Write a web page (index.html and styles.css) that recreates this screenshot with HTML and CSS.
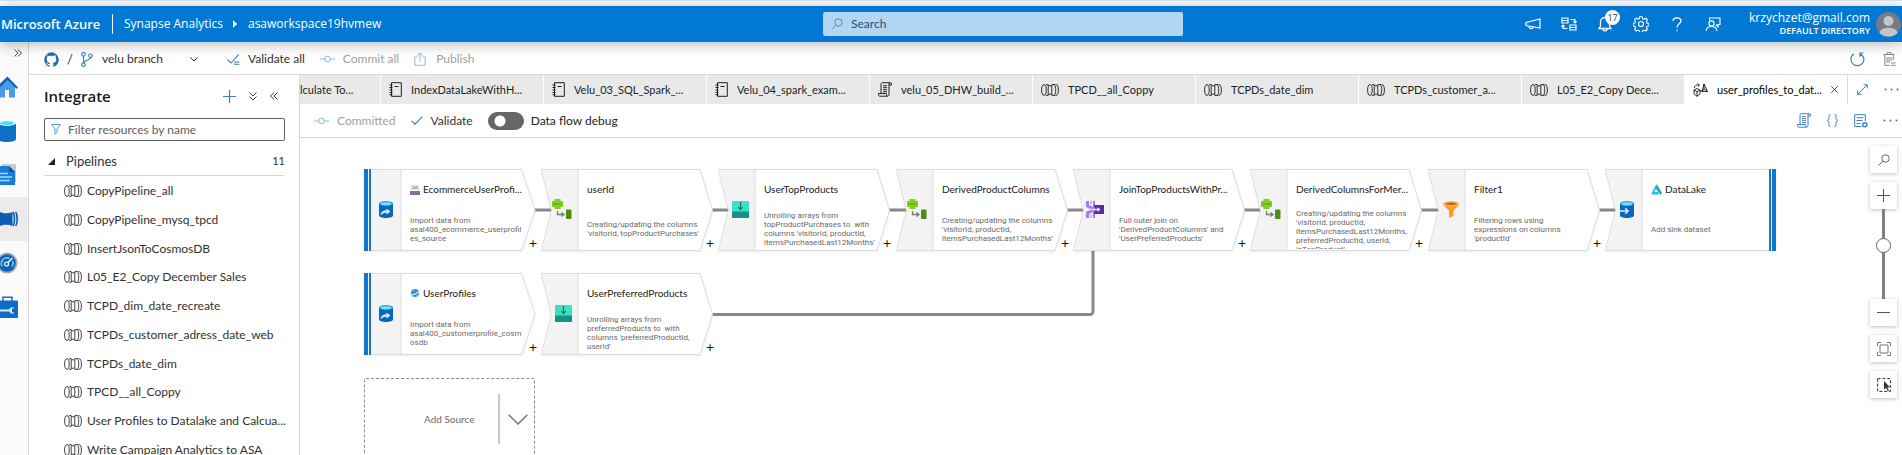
FILE: index.html
```html
<!DOCTYPE html>
<html lang="en">
<head>
<meta charset="utf-8">
<title>Synapse Analytics - asaworkspace19hvmew</title>
<link rel="stylesheet" href="styles.css">
</head>
<body>
<svg class="sprite" aria-hidden="true">
  <symbol id="i-pipe" viewBox="0 0 18 12"><g fill="none" stroke="currentColor" stroke-width=".9"><path d="M3 .6C1.300.6.6 3 .6 6s.7 5.400 2.400 5.400M3 .6c1.600 0 2.200 2.400 2.200 5.400S4.600 11.400 3 11.400M5 .6h2.200M5 11.400h2.200M7.200.6v10.800M7.200 1.800h3.600M7.200 10.200h3.600M10.800.6v10.800M10.800.6h3.700M10.800 11.400h3.700M13.200.6c1.300 1.200 1.500 3 1.500 5.400s-.2 4.200-1.500 5.400M15 .6c1.700 0 2.400 2.400 2.400 5.400s-.7 5.400-2.400 5.400"/></g></symbol>
  <symbol id="i-book" viewBox="0 0 13 15"><g fill="none" stroke="currentColor"><path d="M2.500.7h9.800v13.600H2.500zM5.500 4.500h4"/><path d="M.5 3h3M.5 5.500h3M.5 8h3M.5 10.500h3M.5 12.700h3"/></g></symbol>
  <symbol id="i-script" viewBox="0 0 14 15"><g fill="none" stroke="currentColor"><path d="M3 11V2.500C3 1.200 3.600.7 4.500.7h8c.8 0 1 .6 1 1.300v1H11v9.500c0 1-.6 1.700-1.500 1.700H2c-1 0-1.500-.7-1.500-1.500V11.500h8v1.300c0 .8.400 1.400 1 1.400M11 3V2c0-.8.500-1.300 1.200-1.300M5 3.700h4M5 5.700h4M5 7.700h4M5 9.700h4"/></g></symbol>
  <symbol id="i-flow" viewBox="0 0 15 14"><g fill="none" stroke="currentColor" stroke-width=".8"><path d="M1.500 5C1.500 2.500 3 1.700 6 2M4.500.4 6.500 2 4.800 3.700M4 5.500 7 7v4l-3 2.300L1 11V7zM1 7l3 1.700L7 7M4 8.700v4.600M7 8.200l2.500-.7M11 1l3.500 7.500H9zM11 1v5l3.500 2.500M11 6 9 8.500"/></g></symbol>
  <symbol id="i-commit" viewBox="0 0 15 8"><g fill="none" stroke="currentColor"><circle cx="7.500" cy="4" r="2.800"/><path d="M0 4h4.700M10.300 4H15"/></g></symbol>
  <symbol id="i-check" viewBox="0 0 12 9"><path d="M.7 4.800 4 8.200 11.300.7" fill="none" stroke="currentColor" stroke-width="1.200"/></symbol>
  <symbol id="i-chev" viewBox="0 0 8 5"><path d="M.5.5 4 4 7.500.5" fill="none" stroke="currentColor"/></symbol>
  <symbol id="i-dbl" viewBox="0 0 8 8"><path d="M.5.500 4 4 .5 7.500M4 .5 7.500 4 4 7.500" fill="none" stroke="currentColor"/></symbol>
  <symbol id="i-mag" viewBox="0 0 12 12"><g fill="none" stroke="currentColor"><circle cx="7.500" cy="4.500" r="3.700"/><path d="M4.800 7.200.5 11.500"/></g></symbol>
  <symbol id="i-dots" viewBox="0 0 15 3"><g fill="currentColor"><circle cx="1.500" cy="1.500" r="1"/><circle cx="7.500" cy="1.500" r="1"/><circle cx="13.500" cy="1.500" r="1"/></g></symbol>
  <symbol id="i-source" viewBox="0 0 14 17"><path d="M0 2.500h14v12c0 1.400-3.100 2.500-7 2.500s-7-1.100-7-2.500z" fill="#0a66bd"/><ellipse cx="7" cy="2.500" rx="7" ry="2.500" fill="#2ea3e0"/><ellipse cx="7" cy="2.700" rx="5.300" ry="1.500" fill="#6fe0f5"/><path d="M1.500 14.500c0-3.700 2.500-5.200 6-5.200V7.500l4 3-4 3v-1.700c-3 0-4.500.8-6 2.700z" fill="#c9eaff"/></symbol>
  <symbol id="i-sink" viewBox="0 0 14 17"><path d="M0 2.500h14v12c0 1.400-3.100 2.500-7 2.500s-7-1.100-7-2.500z" fill="#0a66bd"/><ellipse cx="7" cy="2.500" rx="7" ry="2.500" fill="#2ea3e0"/><ellipse cx="7" cy="2.700" rx="5.300" ry="1.500" fill="#6fe0f5"/><path d="M0 10h8M5.300 7.300 8 10l-2.700 2.700" fill="none" stroke="#d9efff" stroke-width="1.500"/></symbol>
  <symbol id="i-derive" viewBox="0 0 20 20"><path d="M2.500 0h6v2H11v6H8.500v2h-6V8H0V2h2.500z" fill="#84d01c"/><path d="M1 4h9v2H1z" fill="#6ab815"/><path d="M5.500 12v3.500h6M9.500 13.500l2.500 2-2.500 2" fill="none" stroke="#7a7a7a" stroke-width="1.300"/><rect x="14" y="10.500" width="5.500" height="9.500" rx="1" fill="#4c8f10"/></symbol>
  <symbol id="i-flat" viewBox="0 0 17 17"><rect width="17" height="17" rx=".8" fill="#3de0c4"/><path d="M0 10.500h17v5.500c0 .6-.4 1-1 1H1c-.6 0-1-.4-1-1z" fill="#1b9088"/><path d="M8.500 1v7M6.300 6.200l2.200 2.300 2.200-2.300" fill="none" stroke="#146f6a" stroke-width="1.200"/></symbol>
  <symbol id="i-join" viewBox="0 0 18 17"><path d="M0 0h3v4l4 2V0h2v7h2v3H9v7H7v-6l-4 2v4H0v-6l5-2.500L0 6z" fill="#a67af4"/><path d="M4 0h2v4L4 3zM4 17h2v-4l-2 1z" fill="#cbb0fa"/><path d="M7.500 4H18v9H7.500l2-4.500z" fill="#5a2ba8"/><path d="M4 8.500h9M11.500 6.800l2 1.700-2 1.700" fill="none" stroke="#e6dafd" stroke-width="1.300"/></symbol>
  <symbol id="i-funnel" viewBox="0 0 16 17"><path d="M0 2.500h16c0 2-1.500 3-5.500 7V15L6 17V9.500C2 5.500 0 4.500 0 2.500z" fill="#fb9e22"/><ellipse cx="8" cy="2.500" rx="8" ry="2.500" fill="#ffc27a"/><ellipse cx="8" cy="2.700" rx="6" ry="1.500" fill="#c8690b"/></symbol>
</svg>

<div class="browser-edge"></div>

<header class="azure">
  <div class="brand"><strong>Microsoft Azure</strong><span class="rule"></span><span>Synapse Analytics</span><i class="caret"></i><span>asaworkspace19hvmew</span></div>
  <label class="search"><svg width="12" height="12"><use href="#i-mag"/></svg><input type="text" placeholder="Search" aria-label="Search"></label>
  <div class="account">
    <button aria-label="Announcements"><svg width="16" height="12" viewBox="0 0 16 12"><path d="M1 4.500 15 1v9L1 7.500zM4 8.200c0 3 4 3 4 .8" fill="none" stroke="#fff" stroke-width="1.200"/></svg></button>
    <button aria-label="Switch directory"><svg width="16" height="14" viewBox="0 0 16 14"><path d="M1 1h6v5H1zM1 3.500h6M9 8h6v5H9zM9 10.500h6M9.500 2.500H14v3.300M12.300 4.300 14 6l1.700-1.700M6.500 11.500H2V8.200M.3 9.700 2 8l1.700 1.700" fill="none" stroke="#fff" stroke-width="1.200"/></svg></button>
    <button class="bell" aria-label="Notifications"><svg width="14" height="16" viewBox="0 0 14 16"><path d="M1 12.500h12L11.500 10V6c0-3-2-4.500-4.500-4.500S2.500 3 2.500 6v4zM5 13c0 2.500 4 2.500 4 0" fill="none" stroke="#fff" stroke-width="1.300"/></svg><span class="badge">17</span></button>
    <button aria-label="Settings"><svg width="16" height="16" viewBox="0 0 16 16"><g fill="none" stroke="#fff"><path d="m6.500 1 .4-.2h2.200l.6 2 1.300.5 1.800-1 1.600 1.600-1 1.800.5 1.300 2 .6v2.200l-2 .6-.5 1.300 1 1.800-1.600 1.600-1.800-1-1.300.5-.6 2H6.900l-.6-2-1.300-.5-1.800 1-1.600-1.600 1-1.800-.5-1.300-2-.6V7.400l2-.6.5-1.300-1-1.800 1.600-1.600 1.800 1 1.300-.5z" stroke-width="1.100"/><circle cx="8" cy="8" r="2.500" stroke-width="1.200"/></g></svg></button>
    <button aria-label="Help"><svg width="10" height="15" viewBox="0 0 10 15"><path d="M1 4c0-4 8-4.200 8-.2C9 6.700 5 7 5 10.500M5 12.700v1.600" fill="none" stroke="#fff" stroke-width="1.300"/></svg></button>
    <button aria-label="Feedback"><svg width="16" height="15" viewBox="0 0 16 15"><path d="M4.500 3.500V1H15v6.500h-2v2.300l-2.300-2.300" fill="none" stroke="#fff" stroke-width="1.100"/><circle cx="6.500" cy="6.500" r="2.600" fill="none" stroke="#fff" stroke-width="1.100"/><path d="M1 14c.7-6 10.300-6 11 0" fill="none" stroke="#fff" stroke-width="1.100"/></svg></button>
    <div class="who"><span>krzychzet@gmail.com</span><b>DEFAULT DIRECTORY</b></div>
    <svg class="avatar" width="25" height="25" viewBox="0 0 25 25"><circle cx="12.500" cy="12.500" r="12.500" fill="#767b84"/><circle cx="12.500" cy="9" r="5" fill="#c3c5ca"/><path d="M3.500 21c1-7 17-7 18 0-4.500 4.700-13.500 4.700-18 0z" fill="#c3c5ca"/></svg>
  </div>
</header>

<div class="shell">
  <nav class="rail">
    <button class="expand" aria-label="Expand"><svg width="8" height="8"><use href="#i-dbl"/></svg></button>
    <a href="#" aria-label="Home"><svg width="22" height="22" viewBox="0 0 22 22"><path d="M4 9v12.500h5V14h4v7.500h6V9l-7.500-7z" fill="#4a9cea"/><path d="M0 11.500 11.500.5 22 11.500l-1.500 1.200-9-8.700-9 8.700z" fill="#1560b0"/></svg></a>
    <a href="#" aria-label="Data"><svg width="22" height="22" viewBox="0 0 22 22"><path d="M2 3h18v16c0 1.700-4 3-9 3s-9-1.300-9-3z" fill="#0f6fc8"/><ellipse cx="11" cy="3" rx="9" ry="3" fill="#e2f3fb"/><ellipse cx="11" cy="3.200" rx="7" ry="2" fill="#4fdaf0"/></svg></a>
    <a href="#" aria-label="Develop"><svg width="22" height="22" viewBox="0 0 22 22"><path d="M6 0h14v18H6z" fill="#c5c9d0"/><path d="M1 2h12l6 6v13H1z" fill="#1b7bd8"/><path d="M13 2v6h6z" fill="#0d57a8"/><path d="M3 9.500h9M3 13h13M3 16.500h11" stroke="#9fdcff" stroke-width="1.500"/></svg></a>
    <a href="#" class="on" aria-label="Integrate"><svg width="22" height="16" viewBox="0 0 22 16"><path d="M4 1c3 1.700 9 1.700 12.500 0v14c-3.500-1.700-9.500-1.700-12.500 0z" fill="#0a5fb4"/><path d="M17 1c2 3.500 2 10.500 0 14M19.700 1c2 3.500 2 10.500 0 14" fill="none" stroke="#0a5fb4" stroke-width="1.600"/></svg></a>
    <a href="#" aria-label="Monitor"><svg width="22" height="22" viewBox="0 0 22 22"><circle cx="11" cy="11" r="10.500" fill="#a9adb3"/><circle cx="11" cy="11" r="8.700" fill="#0b62b8"/><path d="M6 14.500C3.500 8 9 4.500 13.500 6.500M16.500 9c1 2 .5 4-.8 5.500" fill="none" stroke="#6bd9f7" stroke-width="1.500"/><circle cx="10.500" cy="12" r="2" fill="none" stroke="#fff" stroke-width="1.200"/><path d="m12 10.500 4.500-4.500" stroke="#fff" stroke-width="1.400"/></svg></a>
    <a href="#" aria-label="Manage"><svg width="22" height="22" viewBox="0 0 22 22"><path d="M7 5V1.200h9V5" fill="none" stroke="#1672c8" stroke-width="1.600"/><rect y="4.500" width="22" height="17.500" rx="1" fill="#0f6cc4"/><path d="M3 14.500h11" stroke="#d5edff" stroke-width="2"/><path d="M18.500 12.500a3 3 0 1 0 0 4h-2.500v-4z" fill="#d5edff"/></svg></a>
  </nav>

  <div class="workspace">
    <div class="topbar">
      <svg width="15" height="15" viewBox="0 0 16 16"><path fill="#1a6fb5" d="M8 .3a8 8 0 0 0-2.500 15.500c.4.100.5-.2.500-.4v-1.500c-2.200.5-2.700-1-2.700-1-.4-1-.9-1.200-.9-1.200-.7-.5 0-.5 0-.5.800 0 1.300.8 1.300.8.700 1.300 1.900.9 2.300.7.100-.5.300-.9.500-1.100-1.700-.2-3.600-.9-3.600-3.900 0-.9.300-1.600.8-2.100-.1-.2-.4-1 .1-2.100 0 0 .700-.2 2.200.8a7.600 7.600 0 0 1 4 0c1.500-1 2.200-.8 2.200-.8.400 1.100.2 1.900.1 2.100.5.600.8 1.300.8 2.100 0 3.100-1.900 3.700-3.600 3.900.3.300.5.800.5 1.500v2.300c0 .2.100.5.500.4A8 8 0 0 0 8 .3z"/></svg>
      <span class="slash">/</span>
      <svg width="12" height="15" viewBox="0 0 12 15"><g fill="none" stroke="#2f7fc9" stroke-width="1.100"><circle cx="2.500" cy="2.300" r="1.800"/><circle cx="2.500" cy="12.700" r="1.800"/><circle cx="9.500" cy="3.800" r="1.800"/><path d="M2.500 4.100v6.800M9.500 5.600C9.500 9 3 7.500 2.700 10.900"/></g></svg>
      <button class="branch">velu branch <svg width="8" height="5"><use href="#i-chev"/></svg></button>
      <button class="act"><svg class="blue" width="13" height="11" viewBox="0 0 13 11"><path d="M.5 5.500 4 9 11.500.7M7 8h5.500M7 10.300h5.500" fill="none" stroke="currentColor" stroke-width="1.100"/></svg>Validate all</button>
      <button class="act dim"><svg class="blue" width="15" height="8"><use href="#i-commit"/></svg>Commit all</button>
      <button class="act dim pub"><svg class="blue" width="12" height="14" viewBox="0 0 12 14"><path d="M3.500 5H.8v8.300h10.400V5H8.500M6 10V1M3.300 3.500 6 .8l2.700 2.700" fill="none" stroke="currentColor"/></svg>Publish</button>
      <div class="end">
        <button aria-label="Refresh"><svg class="blue" width="15" height="15" viewBox="0 0 15 15"><path d="M4 2C-.5 4.500.2 10 3.500 12.500c3 2 7.500 1.500 9.500-2C14.700 7 13.500 4 10.500 2.300M13.500 1h-3.500v3.700" fill="none" stroke="currentColor" stroke-width="1.200"/></svg></button>
        <button aria-label="Discard all"><svg width="13" height="14" viewBox="0 0 13 14"><path d="M.5 2.500h11M4 2.500V.7h4v1.800M1.800 2.500v10.800h4.700M10.300 2.500V8M4 5v6M6 5v6M8 5v4M8 11h4.500M8 13.300h4.500" fill="none" stroke="#8a8886"/></svg></button>
      </div>
    </div>

    <div class="columns">
      <aside class="side">
        <div class="side-head"><h1>Integrate</h1>
          <button aria-label="Add"><svg class="blue" width="13" height="13" viewBox="0 0 13 13"><path d="M6.500 0v13M0 6.500h13" stroke="currentColor" stroke-width="1.200"/></svg></button>
          <button aria-label="Expand all"><svg width="8" height="9" viewBox="0 0 8 9"><path d="M.5.500 4 4 7.500.5M.5 4.500 4 8l3.500-3.500" fill="none" stroke="#444"/></svg></button>
          <button aria-label="Collapse"><svg class="flip" width="8" height="8"><use href="#i-dbl"/></svg></button>
        </div>
        <label class="filter"><svg width="10" height="11" viewBox="0 0 10 11"><path d="M.5.5h9L6 5v3.500l-2 1.700V5z" fill="none" stroke="#4a90d9" stroke-width=".9"/></svg><input type="text" placeholder="Filter resources by name" aria-label="Filter resources by name"></label>
        <div class="group"><svg width="7" height="7" viewBox="0 0 7 7"><path d="M7 0v7H0z" fill="#222"/></svg><span>Pipelines</span><em>11</em></div>
        <ul class="list">
          <li><svg width="18" height="12"><use href="#i-pipe"/></svg><span>CopyPipeline_all</span></li>
          <li><svg width="18" height="12"><use href="#i-pipe"/></svg><span>CopyPipeline_mysq_tpcd</span></li>
          <li><svg width="18" height="12"><use href="#i-pipe"/></svg><span>InsertJsonToCosmosDB</span></li>
          <li><svg width="18" height="12"><use href="#i-pipe"/></svg><span>L05_E2_Copy December Sales</span></li>
          <li><svg width="18" height="12"><use href="#i-pipe"/></svg><span>TCPD_dim_date_recreate</span></li>
          <li><svg width="18" height="12"><use href="#i-pipe"/></svg><span>TCPDs_customer_adress_date_web</span></li>
          <li><svg width="18" height="12"><use href="#i-pipe"/></svg><span>TCPDs_date_dim</span></li>
          <li><svg width="18" height="12"><use href="#i-pipe"/></svg><span>TPCD__all_Coppy</span></li>
          <li><svg width="18" height="12"><use href="#i-pipe"/></svg><span>User Profiles to Datalake and Calcua...</span></li>
          <li><svg width="18" height="12"><use href="#i-pipe"/></svg><span>Write Campaign Analytics to ASA</span></li>
        </ul>
      </aside>

      <main class="editor">
        <div class="tabrow">
          <div class="tabs">
            <button class="tab first"><span>lculate To...</span></button>
            <button class="tab"><svg width="13" height="15"><use href="#i-book"/></svg><span>IndexDataLakeWithH...</span></button>
            <button class="tab"><svg width="13" height="15"><use href="#i-book"/></svg><span>Velu_03_SQL_Spark_...</span></button>
            <button class="tab"><svg width="13" height="15"><use href="#i-book"/></svg><span>Velu_04_spark_exam...</span></button>
            <button class="tab"><svg width="14" height="15"><use href="#i-script"/></svg><span>velu_05_DHW_build_...</span></button>
            <button class="tab"><svg width="18" height="12"><use href="#i-pipe"/></svg><span>TPCD__all_Coppy</span></button>
            <button class="tab"><svg width="18" height="12"><use href="#i-pipe"/></svg><span>TCPDs_date_dim</span></button>
            <button class="tab"><svg width="18" height="12"><use href="#i-pipe"/></svg><span>TCPDs_customer_a...</span></button>
            <button class="tab"><svg width="18" height="12"><use href="#i-pipe"/></svg><span>L05_E2_Copy Dece...</span></button>
            <button class="tab active"><svg width="15" height="14"><use href="#i-flow"/></svg><span>user_profiles_to_dat...</span><svg class="close" width="7" height="7" viewBox="0 0 7 7"><path d="m.3.3 6.400 6.400M6.700.3.300 6.700" stroke="#333" stroke-width=".9"/></svg></button>
          </div>
          <div class="tabend">
            <button aria-label="Maximize"><svg class="blue" width="11" height="11" viewBox="0 0 11 11"><path d="M1 10 10 1M6.500.7h3.800v3.800M.7 6.500v3.800h3.800" fill="none" stroke="currentColor"/></svg></button>
            <button aria-label="More"><svg width="15" height="3"><use href="#i-dots"/></svg></button>
          </div>
        </div>
        <div class="bar">
          <span class="act dim"><svg class="blue" width="15" height="8"><use href="#i-commit"/></svg>Committed</span>
          <button class="act"><svg class="blue" width="12" height="9"><use href="#i-check"/></svg>Validate</button>
          <label class="toggle"><input type="checkbox">Data flow debug</label>
          <div class="end">
            <button aria-label="Script"><svg class="blue" width="14" height="15"><use href="#i-script"/></svg></button>
            <button aria-label="Code"><svg class="blue" width="13" height="13" viewBox="0 0 13 13"><path d="M4.500.5C2.500.5 3 2 3 3.500S2.700 6 1 6.500c1.700.5 2 1.500 2 3s-.5 3 1.500 3M8.500.5c2 0 1.500 1.500 1.500 3s.3 2.500 2 3c-1.700.5-2 1.500-2 3s.5 3-1.500 3" fill="none" stroke="currentColor"/></svg></button>
            <button aria-label="Properties"><svg class="blue" width="14" height="14" viewBox="0 0 14 14"><g fill="none" stroke="currentColor"><path d="M7.500 12.500H.7V.7h10.600V7M2.500 3.700h7M2.500 6.500h6M2.500 9.500h4"/><circle cx="10.800" cy="10.800" r="2" stroke-width="1.500"/></g></svg></button>
            <button aria-label="More"><svg width="15" height="3"><use href="#i-dots"/></svg></button>
          </div>
        </div>

        <div class="canvas">
          <svg class="links" width="1500" height="317" aria-hidden="true"><g fill="none" stroke="#888" stroke-width="3"><path d="M235 72h17M412 72h17M589 72h18M767 72h17M944 72h17M1121 72h18M1299 72h17M412 176.500h378a3 3 0 0 0 3-3V113"/></g></svg>

          <article class="node src" style="left:64px;top:31px"><svg class="shape" width="172" height="82" viewBox="0 0 172 82"><path d="M7 .5h150.500l13.500 41-13.500 40H7z" fill="#fff" stroke="#dcdcdc"/><path d="M7 1h30v80H7z" fill="#f3f3f3"/><path d="M37 1v80" stroke="#dedede"/><path d="M0 0h4v82H0zM5 0h2v82H5z" fill="#1276cc"/></svg><svg class="ico" width="14" height="17"><use href="#i-source"/></svg>
            <h2><svg width="10" height="11" viewBox="0 0 10 11"><path d="M1 1h8v5H1z" fill="#e6dde6"/><path d="M2.500 5 4 2.500 5 4.500l1.500-2 1 2.500" fill="none" stroke="#b79cb0"/><path d="M0 7h10v4H0z" fill="#8c6a9c"/></svg>EcommerceUserProfi...</h2><p>Import data from asal400_ecommerce_userprofiles_source</p><button class="plus" aria-label="Add step">+</button></article>

          <article class="node" style="left:241px;top:31px"><svg class="shape" width="172" height="82" viewBox="0 0 172 82"><path d="M.5.5h158.500l12.500 41-12.500 40H.5l10-40z" fill="#fff" stroke="#dcdcdc"/><path d="M1.200 1H37v80H1.200l10-39.500z" fill="#f3f3f3"/><path d="M37 1v80" stroke="#dedede"/></svg><svg class="ico" width="20" height="20"><use href="#i-derive"/></svg>
            <h2>userId</h2><p>Creating/updating the columns 'visitorId, topProductPurchases'</p><button class="plus" aria-label="Add step">+</button></article>

          <article class="node" style="left:418px;top:31px"><svg class="shape" width="172" height="82" viewBox="0 0 172 82"><path d="M.5.5h158.500l12.500 41-12.500 40H.5l10-40z" fill="#fff" stroke="#dcdcdc"/><path d="M1.200 1H37v80H1.200l10-39.500z" fill="#f3f3f3"/><path d="M37 1v80" stroke="#dedede"/></svg><svg class="ico" width="17" height="17"><use href="#i-flat"/></svg>
            <h2>UserTopProducts</h2><p>Unrolling arrays from topProductPurchases to &nbsp;with columns 'visitorId, productId, itemsPurchasedLast12Months'</p><button class="plus" aria-label="Add step">+</button></article>

          <article class="node" style="left:596px;top:31px"><svg class="shape" width="172" height="82" viewBox="0 0 172 82"><path d="M.5.5h158.500l12.500 41-12.500 40H.5l10-40z" fill="#fff" stroke="#dcdcdc"/><path d="M1.200 1H37v80H1.200l10-39.500z" fill="#f3f3f3"/><path d="M37 1v80" stroke="#dedede"/></svg><svg class="ico" width="20" height="20"><use href="#i-derive"/></svg>
            <h2>DerivedProductColumns</h2><p>Creating/updating the columns 'visitorId, productId, itemsPurchasedLast12Months'</p><button class="plus" aria-label="Add step">+</button></article>

          <article class="node" style="left:773px;top:31px"><svg class="shape" width="172" height="82" viewBox="0 0 172 82"><path d="M.5.5h158.500l12.500 41-12.500 40H.5l10-40z" fill="#fff" stroke="#dcdcdc"/><path d="M1.200 1H37v80H1.200l10-39.500z" fill="#f3f3f3"/><path d="M37 1v80" stroke="#dedede"/></svg><svg class="ico" width="18" height="17"><use href="#i-join"/></svg>
            <h2>JoinTopProductsWithPr...</h2><p>Full outer join on 'DerivedProductColumns' and 'UserPreferredProducts'</p><button class="plus" aria-label="Add step">+</button></article>

          <article class="node" style="left:950px;top:31px"><svg class="shape" width="172" height="82" viewBox="0 0 172 82"><path d="M.5.5h158.500l12.500 41-12.500 40H.5l10-40z" fill="#fff" stroke="#dcdcdc"/><path d="M1.200 1H37v80H1.200l10-39.500z" fill="#f3f3f3"/><path d="M37 1v80" stroke="#dedede"/></svg><svg class="ico" width="20" height="20"><use href="#i-derive"/></svg>
            <h2>DerivedColumnsForMer...</h2><p>Creating/updating the columns 'visitorId, productId, itemsPurchasedLast12Months, preferredProductId, userId, isTopProduct'</p><button class="plus" aria-label="Add step">+</button></article>

          <article class="node" style="left:1128px;top:31px"><svg class="shape" width="172" height="82" viewBox="0 0 172 82"><path d="M.5.5h158.500l12.500 41-12.500 40H.5l10-40z" fill="#fff" stroke="#dcdcdc"/><path d="M1.200 1H37v80H1.200l10-39.500z" fill="#f3f3f3"/><path d="M37 1v80" stroke="#dedede"/></svg><svg class="ico" width="16" height="17"><use href="#i-funnel"/></svg>
            <h2>Filter1</h2><p>Filtering rows using expressions on columns 'productId'</p><button class="plus" aria-label="Add step">+</button></article>

          <article class="node sink" style="left:1305px;top:31px"><svg class="shape" width="172" height="82" viewBox="0 0 172 82"><path d="M.5.5H165v81H.5l10-40z" fill="#fff" stroke="#dcdcdc"/><path d="M1.200 1H37v80H1.200l10-39.500z" fill="#f3f3f3"/><path d="M37 1v80" stroke="#dedede"/><path d="M164 0h2v82h-2zM167 0h4v82h-4z" fill="#1276cc"/></svg><svg class="ico" width="14" height="17"><use href="#i-sink"/></svg>
            <h2><svg width="11" height="11" viewBox="0 0 11 11"><path d="M5.500 0 11 9 9.500 11 4.800 4.500z" fill="#1a9fc9"/><path d="M4.800 1 6 3.500 3 8h4l1 2.500H0z" fill="#2bc0dd"/></svg>DataLake</h2><p>Add sink dataset</p></article>

          <article class="node src" style="left:64px;top:135px"><svg class="shape" width="172" height="82" viewBox="0 0 172 82"><path d="M7 .5h150.500l13.500 41-13.500 40H7z" fill="#fff" stroke="#dcdcdc"/><path d="M7 1h30v80H7z" fill="#f3f3f3"/><path d="M37 1v80" stroke="#dedede"/><path d="M0 0h4v82H0zM5 0h2v82H5z" fill="#1276cc"/></svg><svg class="ico" width="14" height="17"><use href="#i-source"/></svg>
            <h2><svg width="10" height="10" viewBox="0 0 10 10"><circle cx="5" cy="5" r="4" fill="#2f8fe0"/><path d="M0 6.500C3 7.500 8 5 10 2.500" stroke="#d7ecfb" stroke-width="1.300" fill="none"/><path d="M1.500 2h3M6 8h2" stroke="#8dd3f5"/></svg>UserProfiles</h2><p>Import data from asal400_customerprofile_cosmosdb</p><button class="plus" aria-label="Add step">+</button></article>

          <article class="node" style="left:241px;top:135px"><svg class="shape" width="172" height="82" viewBox="0 0 172 82"><path d="M.5.5h158.500l12.500 41-12.500 40H.5l10-40z" fill="#fff" stroke="#dcdcdc"/><path d="M1.200 1H37v80H1.200l10-39.500z" fill="#f3f3f3"/><path d="M37 1v80" stroke="#dedede"/></svg><svg class="ico" width="17" height="17"><use href="#i-flat"/></svg>
            <h2>UserPreferredProducts</h2><p>Unrolling arrays from preferredProducts to &nbsp;with columns 'preferredProductId, userId'</p><button class="plus" aria-label="Add step">+</button></article>

          <button class="add" style="left:64px;top:240px"><span>Add Source</span><i></i><svg width="20" height="11" viewBox="0 0 20 11"><path d="m.7.700 9.300 9.300L19.300.7" fill="none" stroke="#777" stroke-width="1.500"/></svg></button>

          <div class="zoombar">
            <button class="tool" aria-label="Search canvas"><svg width="12" height="12"><use href="#i-mag"/></svg></button>
            <div class="scale">
              <button class="tool" aria-label="Zoom in"><svg width="13" height="13" viewBox="0 0 13 13"><path d="M6.500 0v13M0 6.500h13" stroke="#555"/></svg></button>
              <input type="range" aria-label="Zoom" value="62">
              <button class="tool" aria-label="Zoom out"><svg width="13" height="13" viewBox="0 0 13 13"><path d="M0 6.500h13" stroke="#555"/></svg></button>
            </div>
            <button class="tool" aria-label="Zoom to fit"><svg width="14" height="14" viewBox="0 0 14 14"><path d="M.5 4V.5H4M10 .5h3.500V4M13.500 10v3.500H10M4 13.500H.5V10M3 3h8v8H3z" fill="none" stroke="#777"/></svg></button>
            <button class="tool" aria-label="Multi select"><svg width="14" height="14" viewBox="0 0 14 14"><rect x=".6" y=".6" width="12.800" height="12.800" fill="none" stroke="#333" stroke-dasharray="3 1.800"/><path d="M7 3v8.500l2-1.800 1.800 3.300 1.200-.6-1.700-3.200H13z" fill="#333"/></svg></button>
          </div>
        </div>
      </main>
    </div>
  </div>
</div>
</body>
</html>
```
FILE: styles.css
```css
* { box-sizing: border-box; }
html, body { height: 100%; }
body {
  margin: 0;
  display: flex;
  flex-direction: column;
  overflow: hidden;
  background: #fff;
  color: #323130;
  font: 12px/16px Lato, "Noto Sans", sans-serif;
}
button, input { font: inherit; color: inherit; }
button { padding: 0; border: 0; background: none; display: flex; align-items: center; white-space: nowrap; }
svg { display: block; flex: none; }
.sprite { position: absolute; width: 0; height: 0; }
.blue { color: #3b7fc9; }

.browser-edge { flex: none; height: 6px; border-top: 1px solid #dbe5ef; }

.azure {
  flex: none;
  position: relative;
  z-index: 2;
  height: 36px;
  display: grid;
  grid-template-columns: minmax(0, 823fr) 360px minmax(0, 719fr);
  align-items: center;
  background: #0078d4;
  color: #fff;
  font-family: "Open Sans", "Noto Sans", sans-serif;
  box-shadow: 0 2px 14px rgba(0, 0, 0, .3);
}
.brand { display: flex; align-items: center; white-space: nowrap; }
.brand strong { width: 112px; padding-left: 1px; font-size: 13px; font-weight: 600; }
.rule { width: 1px; height: 20px; margin-right: 11px; background: #fff; }
.caret { margin: 0 11px 0 10px; border: 4px solid transparent; border-left-color: #fff; border-right: 0; }
.search { display: flex; align-items: center; gap: 8px; height: 24px; padding-left: 8px; border-radius: 2px; background: #b2d6f2; color: #5b7fc4; font-family: Lato, sans-serif; }
.search input, .filter input { flex: 1; min-width: 0; padding: 0; border: 0; outline: 0; background: none; }
.search input::placeholder { color: #234f7d; opacity: 1; }
.account { display: flex; align-items: center; justify-content: flex-end; padding-right: 1px; }
.account button { position: relative; width: 36px; justify-content: center; }
.badge { position: absolute; left: 18px; top: -6px; width: 15px; height: 15px; border-radius: 8px; background: #fff; color: #333; font-size: 9px; line-height: 15px; text-align: center; }
.who { display: flex; flex-direction: column; align-items: flex-end; margin: 0 6px 0 18px; line-height: 14px; white-space: nowrap; }
.who b { font-size: 9px; line-height: 12px; font-weight: 600; }

.shell { flex: 1; min-height: 0; display: flex; }
.rail { flex: none; width: 29px; overflow: hidden; border-right: 1px solid #d6d6d6; background: #fafafa; }
.rail a { display: flex; align-items: center; height: 44px; width: 28px; }
.rail a svg { margin-left: -4px; }
.rail .on { background: #edebe9; }
.expand { height: 23px; padding: 0 0 2px 14px; color: #444; }

.workspace { flex: 1; min-width: 0; display: flex; flex-direction: column; }
.topbar { flex: none; height: 33px; display: flex; align-items: center; padding: 2px 6px 0 15px; border-bottom: 1px solid #d8d8d8; }
.slash { width: 22px; text-align: center; font-size: 13px; }
.branch { width: 108px; margin: 0 17px 0 9px; padding-right: 12px; justify-content: space-between; }
.act { display: flex; align-items: center; gap: 8px; margin-right: 15px; }
.dim { color: #a19f9d; }
.pub { gap: 10px; }
.dim .blue { color: #8ab8e6; }
.end { margin-left: auto; display: flex; align-items: center; gap: 18px; }

.columns { flex: 1; min-height: 0; display: flex; }
.side { flex: none; width: 271px; overflow: hidden; padding: 10px 14px 0 15px; border-right: 1px solid #d8d8d8; }
.side-head { display: flex; align-items: center; gap: 13px; height: 22px; padding-right: 7px; font-family: "Open Sans", sans-serif; }
.side-head h1 { margin: 0 auto 0 0; font-size: 15px; line-height: 22px; font-weight: 600; color: #1b1a19; }
.flip { transform: scaleX(-1); }
.filter { display: flex; align-items: center; gap: 7px; height: 23px; margin-top: 11px; padding-left: 6px; border: 1px solid #605e5c; border-radius: 2px; }
.filter input::placeholder { color: #605e5c; opacity: 1; }
.group { display: flex; align-items: center; gap: 11px; height: 35px; padding: 6px 0 0 4px; border-bottom: 1px solid #d8d8d8; }
.group span { font-size: 13px; }
.group em { margin-left: auto; font-style: normal; font-size: 11px; }
.list { display: grid; grid-auto-rows: 1fr; height: 287px; margin: 1px 0 0; padding: 0 0 0 20px; list-style: none; }
.list li { display: flex; align-items: center; gap: 5px; white-space: nowrap; }

.editor { flex: 1; min-width: 0; display: flex; flex-direction: column; }
.tabrow { flex: none; display: flex; height: 29px; }
.tabs { flex: 1; min-width: 0; display: flex; justify-content: flex-end; overflow: hidden; }
.tab { flex: none; width: 163px; padding-left: 8px; gap: 9px; border-right: 1px solid #fff; background: #e9e9e9; font-size: 11px; color: #201f1e; }
.first { flex: 1; min-width: 0; padding-left: 0; }
.active { background: #fff; border-right-color: #d8d8d8; color: #000; }
.close { margin: 0 16px 0 auto; }
.tabend { flex: none; width: 54px; display: flex; align-items: center; justify-content: flex-end; gap: 16px; padding-right: 3px; color: #3b6fb0; }
.bar { flex: none; display: flex; align-items: center; height: 34px; padding: 0 4px 0 14px; border-bottom: 1px solid #d8d8d8; }
.bar .end { gap: 15px; color: #3b6fb0; }
.toggle { display: flex; align-items: center; gap: 7px; white-space: nowrap; color: #201f1e; }
.toggle input { appearance: none; width: 36px; height: 18px; margin: 0; border-radius: 9px; background: radial-gradient(circle at 12px 9px, #fff 5px, transparent 6px) #666; }

.canvas { position: relative; flex: 1; min-height: 0; overflow: hidden; }
.links { position: absolute; left: 0; top: 0; }
.node { position: absolute; width: 172px; height: 82px; display: grid; grid-template-columns: 37px 120px; grid-template-rows: 32px 48px; column-gap: 9px; }
.node > * { position: relative; }
.node .shape { position: absolute; left: 0; top: 0; filter: drop-shadow(0 1px 1px rgba(0, 0, 0, .08)); }
.node .ico { grid-row: 1 / 3; align-self: center; justify-self: end; margin-right: 6px; }
.src .ico, .sink .ico { margin-right: 8px; }
.node h2 { display: flex; align-items: center; gap: 3px; margin: 0; padding-top: 8px; font-size: 10px; line-height: 14px; font-weight: 400; color: #1b1a19; white-space: nowrap; }
.node p { display: flex; flex-direction: column; justify-content: safe center; overflow: hidden; width: 114px; height: 40px; margin: 8px 0 0; font-family: Roboto, sans-serif; font-size: 8px; line-height: 9px; color: #6b6967; word-break: break-word; }
.node .plus { position: absolute; right: -1px; bottom: 2px; font-size: 14px; line-height: 13px; color: #111; }
.add { position: absolute; width: 171px; height: 82px; border: 1px dashed #8a8a8a; border-radius: 2px; font-size: 10px; color: #6b6967; }
.add span { width: 133px; padding-left: 59px; text-align: left; }
.add i { width: 2px; height: 50px; margin-right: 8px; background: #c8c8c8; }

.zoombar { position: absolute; right: 5px; top: 8px; display: flex; flex-direction: column; gap: 9px; }
.scale { display: flex; flex-direction: column; align-items: center; }
.tool { width: 27px; height: 27px; justify-content: center; background: #fff; color: #666; box-shadow: 0 1px 4px rgba(0, 0, 0, .25); }
.zoombar input { appearance: none; writing-mode: vertical-lr; direction: rtl; width: 15px; height: 90px; margin: 0; background: linear-gradient(#808080, #808080) center / 3px 100% no-repeat; }
.zoombar input::-webkit-slider-thumb { appearance: none; width: 15px; height: 15px; border: 1px solid #666; border-radius: 8px; background: #fff; }
```
